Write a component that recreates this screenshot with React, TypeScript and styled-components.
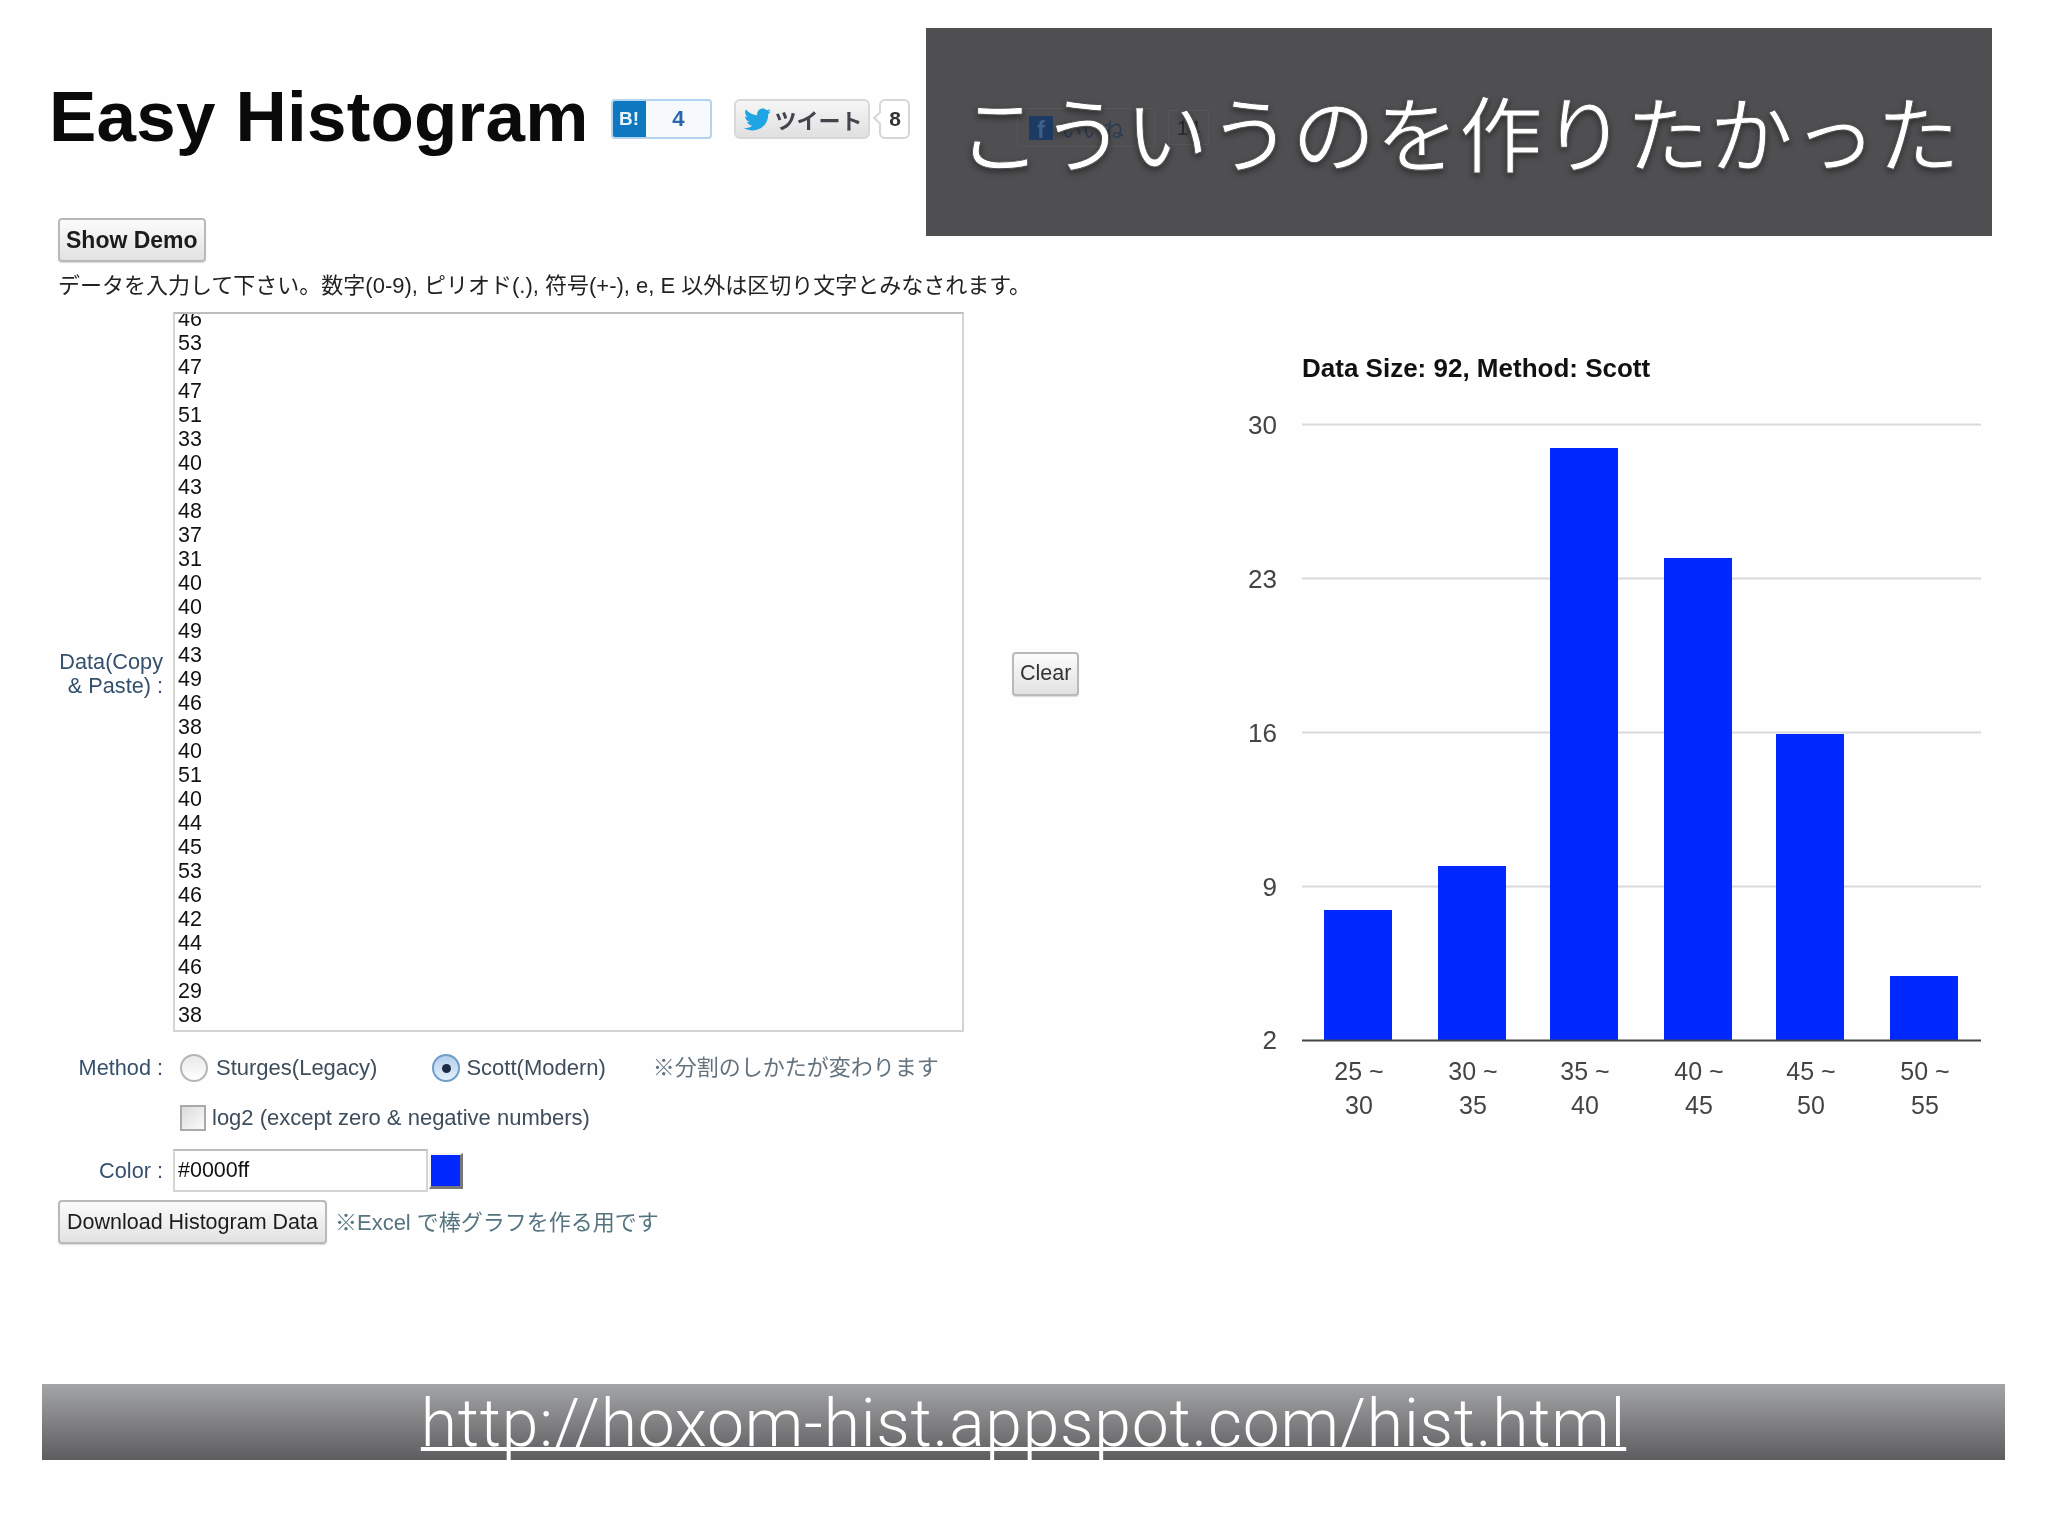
import styled, { createGlobalStyle } from "styled-components";
import { FaTwitter } from "react-icons/fa";

const SANS = `"Liberation Sans", "Noto Sans CJK JP", sans-serif`;

const GlobalStyle = createGlobalStyle`
  html, body {
    margin: 0;
    padding: 0;
    background: #fefefe;
  }
  * {
    box-sizing: border-box;
  }
`;

const Slide = styled.div`
  position: relative;
  width: 2048px;
  height: 1536px;
  overflow: hidden;
  font-family: ${SANS};
  font-size: 22px;
  color: #333;
  background: #fefefe;
`;

const Header = styled.header`
  display: flex;
  align-items: center;
  height: 112px;
  margin-top: 60px;
  padding-left: 49px;
  filter: blur(0.5px);
`;

const Title = styled.h1`
  margin: 0;
  font-size: 71px;
  font-weight: 700;
  letter-spacing: 0.2px;
  line-height: 1;
  color: #0a0a0a;
`;

const ShareGroup = styled.div`
  display: flex;
  margin-top: 6px;
`;

const HatenaButton = styled.div`
  display: flex;
  width: 101px;
  height: 40px;
  margin-left: 23px;
  border: 2px solid #b3d3ee;
  border-radius: 4px;
  overflow: hidden;
  background: #f6fafd;
`;

const HatenaMark = styled.span`
  width: 35px;
  margin: -2px 0 -2px -2px;
  background: #0d78c0;
  color: #e8f3fb;
  font-size: 19px;
  font-weight: 700;
  line-height: 40px;
  text-align: center;
`;

const HatenaCount = styled.span`
  flex: 1;
  color: #2a66ad;
  font-size: 22px;
  font-weight: 700;
  line-height: 36px;
  text-align: center;
`;

const TweetButton = styled.div`
  display: flex;
  align-items: center;
  gap: 3px;
  width: 136px;
  height: 40px;
  margin-left: 22px;
  padding-left: 8px;
  border: 2px solid #d8d8d8;
  border-radius: 6px;
  background: linear-gradient(#f6f6f6, #e0e0e0);
  color: #44444c;
  font-size: 22px;
  font-weight: 700;
  white-space: nowrap;

  svg {
    flex: none;
    color: #1fa5e4;
  }
`;

const CountBubble = styled.span`
  position: relative;
  width: 31px;
  height: 40px;
  margin-left: 9px;
  border: 2px solid #d6d6d6;
  border-radius: 6px;
  background: #fff;
  color: #333;
  font-size: 21px;
  font-weight: 700;
  line-height: 36px;
  text-align: center;

  &::before {
    content: "";
    position: absolute;
    left: -6px;
    top: 12px;
    width: 8px;
    height: 8px;
    border-left: 2px solid #d6d6d6;
    border-bottom: 2px solid #d6d6d6;
    background: #fff;
    transform: rotate(45deg);
  }
`;

const Banner = styled.div`
  position: absolute;
  left: 926px;
  top: 28px;
  display: flex;
  align-items: center;
  width: 1066px;
  height: 208px;
  padding: 0 0 4px 43px;
  background: #4f4e50;
`;

const BannerText = styled.div`
  position: relative;
  margin-left: -11px;
  font-family: "Noto Sans CJK JP", sans-serif;
  font-size: 83.5px;
  font-weight: 400;
  line-height: 1;
  white-space: nowrap;
  color: #fff;
  -webkit-text-stroke: 1px #4f4e50;
  filter: drop-shadow(0 3px 3px rgba(0, 0, 0, 0.4));
`;

const GhostShare = styled.div`
  position: absolute;
  left: 91px;
  top: 80px;
  display: flex;
  align-items: center;
  gap: 13px;
  filter: blur(0.6px);
`;

const GhostLike = styled.div`
  display: flex;
  align-items: center;
  width: 138px;
  height: 39px;
  padding-left: 11px;
  border: 1px solid #575658;
  border-radius: 5px;
  color: #2b3b52;
  font-size: 21px;
`;

const GhostMark = styled.span`
  width: 24px;
  height: 24px;
  background: #1d3a63;
  color: #3f5f87;
  font-size: 24px;
  font-weight: 700;
  line-height: 27px;
  text-align: center;
`;

const GhostLabel = styled.span`
  margin-left: 8px;
`;

const GhostCount = styled.span`
  width: 41px;
  height: 35px;
  border: 1px solid #575658;
  color: #2a2a2c;
  font-size: 21px;
  line-height: 33px;
  text-align: center;
`;

const Main = styled.main`
  display: flex;
  margin-top: 46px;
  padding-left: 58px;
  filter: blur(0.5px);
`;

const FormColumn = styled.section`
  flex: none;
  width: 1182px;
`;

const PushButton = styled.button<{ $bold?: boolean }>`
  display: block;
  height: 44px;
  padding: 0 ${(p) => (p.$bold ? 6 : 7)}px;
  border: 2px solid #b9b9b9;
  border-radius: 4px;
  background: linear-gradient(#fbfbfb, #e2e2e2);
  box-shadow: 0 1px 1px rgba(0, 0, 0, 0.15);
  color: #1c1c1c;
  font-family: ${SANS};
  font-size: ${(p) => (p.$bold ? 23 : 21.5)}px;
  font-weight: ${(p) => (p.$bold ? 700 : 400)};
  white-space: nowrap;
`;

const Help = styled.p`
  margin: 12px 0 0;
  font-size: 22px;
  line-height: 24px;
  color: #222;
  white-space: nowrap;
`;

const DataRow = styled.div`
  display: grid;
  grid-template-columns: 105px 791px auto;
  align-items: center;
  column-gap: 10px;
  margin-top: 14px;
`;

const FieldLabel = styled.label`
  color: #35506c;
  font-size: 21.7px;
  line-height: 24px;
  text-align: right;
`;

const DataLabel = styled(FieldLabel)`
  margin-top: 3px;
`;

const DataBox = styled.div`
  height: 720px;
  overflow: hidden;
  padding-left: 3px;
  border: 2px solid #d4d4d4;
  border-top-color: #bdbdbd;
  background: #fff;
  color: #111;
  font-size: 21.5px;
  line-height: 24px;
`;

const DataLine = styled.div`
  &:first-child {
    margin-top: -7px;
  }
`;

const ClearButton = styled(PushButton)`
  justify-self: start;
  margin: 3px 0 0 38px;
  padding: 0 6px;
  color: #333;
`;

const FormRow = styled.div`
  display: grid;
  grid-template-columns: 105px 1fr;
  align-items: center;
  column-gap: 10px;
`;

const MethodRow = styled(FormRow)`
  height: 30px;
  margin-top: 21px;
`;

const OptionRow = styled(FormRow)`
  height: 28px;
  margin-top: 21px;
`;

const ColorRow = styled(FormRow)`
  height: 43px;
  margin-top: 17px;
`;

const Options = styled.div`
  display: flex;
  align-items: center;
  padding-left: 7px;
  color: #3d4d5c;
  white-space: nowrap;
`;

const Radio = styled.span<{ $on?: boolean }>`
  flex: none;
  display: flex;
  align-items: center;
  justify-content: center;
  width: 28px;
  height: 28px;
  border: 2px solid ${(p) => (p.$on ? "#6f9ccb" : "#b5b5b5")};
  border-radius: 50%;
  background: ${(p) =>
    p.$on ? "linear-gradient(#b4d0ec, #e4f0fa)" : "linear-gradient(#e9e9e9, #fff)"};

  &::after {
    content: "";
    display: ${(p) => (p.$on ? "block" : "none")};
    width: 9px;
    height: 9px;
    border-radius: 50%;
    background: #1d2c44;
  }
`;

const OptionText = styled.span<{ $gap: number }>`
  margin-left: ${(p) => p.$gap}px;
`;

const SecondRadio = styled(Radio)`
  margin-left: 55px;
`;

const MethodNote = styled.span`
  margin: -6px 0 0 47px;
  color: #62737f;
`;

const CheckBox = styled.span`
  flex: none;
  width: 26px;
  height: 26px;
  border: 2px solid #a9a9a9;
  background: linear-gradient(135deg, #dcdcdc, #fafafa);
`;

const ColorField = styled.div`
  display: flex;
  align-items: center;
`;

const ColorInput = styled.div`
  width: 255px;
  height: 43px;
  padding-left: 3px;
  border: 2px solid #d4d4d4;
  border-top-color: #bdbdbd;
  background: #fff;
  color: #111;
  font-size: 21.5px;
  line-height: 39px;
`;

const Swatch = styled.span<{ $color: string }>`
  width: 34px;
  height: 36px;
  margin-left: 1px;
  border: 2px solid #f4f4f4;
  border-right: 3px solid #777;
  border-bottom: 3px solid #777;
  background: ${(p) => p.$color};
`;

const DownloadRow = styled.div`
  display: flex;
  align-items: center;
  margin-top: 8px;
`;

const DownloadNote = styled.span`
  margin: -5px 0 0 8px;
  color: #55747f;
  white-space: nowrap;
`;

const ChartSvg = styled.svg`
  flex: none;
  display: block;
  width: 760px;
  height: 790px;
  margin-top: 122px;
  font-family: ${SANS};
`;

const UrlBar = styled.div`
  position: absolute;
  left: 42px;
  right: 43px;
  top: 1384px;
  height: 76px;
  background: linear-gradient(#a4a5a6, #5d5d60);
  text-align: center;
`;

const UrlLink = styled.a`
  color: #fff;
  font-family: Roboto, "Liberation Sans", sans-serif;
  font-size: 66px;
  font-weight: 300;
  letter-spacing: 0.77px;
  line-height: 79px;
  text-decoration: underline;
  text-decoration-thickness: 4px;
  text-decoration-skip-ink: none;
  text-underline-offset: 1px;
`;

const data = [46, 53, 47, 47, 51, 33, 40, 43, 48, 37, 31, 40, 40, 49, 43, 49, 46, 38, 40, 51, 40, 44, 45, 53, 46, 42, 44, 46, 29, 38];

const gridLines = [
  { label: "30", y: 424.5 },
  { label: "23", y: 578.5 },
  { label: "16", y: 732.5 },
  { label: "9", y: 886.5 },
];

const bars = [
  { x: 1324, top: 910, from: "25 ~", to: "30" },
  { x: 1438, top: 866, from: "30 ~", to: "35" },
  { x: 1550, top: 448, from: "35 ~", to: "40" },
  { x: 1664, top: 558, from: "40 ~", to: "45" },
  { x: 1776, top: 734, from: "45 ~", to: "50" },
  { x: 1890, top: 976, from: "50 ~", to: "55" },
];

function Histogram() {
  return (
    <ChartSvg viewBox="1240 340 760 790">
      <text x="1302" y="377" fontSize="26" fontWeight="700" fill="#111">
        Data Size: 92, Method: Scott
      </text>
      {gridLines.map((g) => (
        <g key={g.label}>
          <line x1="1302" x2="1981" y1={g.y} y2={g.y} stroke="#d9d9d9" strokeWidth="2" />
          <text x="1277" y={g.y + 9} fontSize="26" fill="#444" textAnchor="end">
            {g.label}
          </text>
        </g>
      ))}
      {bars.map((b) => (
        <g key={b.from}>
          <rect x={b.x} y={b.top} width="68" height={1040 - b.top} fill="#0028ff" />
          <text x={b.x + 35} y="1080" fontSize="25" fill="#444" textAnchor="middle">
            {b.from}
          </text>
          <text x={b.x + 35} y="1114" fontSize="25" fill="#444" textAnchor="middle">
            {b.to}
          </text>
        </g>
      ))}
      <line x1="1302" x2="1981" y1="1040.5" y2="1040.5" stroke="#444" strokeWidth="2" />
      <text x="1277" y="1049" fontSize="26" fill="#444" textAnchor="end">
        2
      </text>
    </ChartSvg>
  );
}

export default function App() {
  return (
    <Slide>
      <GlobalStyle />
      <Header>
        <Title>Easy Histogram</Title>
        <ShareGroup>
          <HatenaButton>
            <HatenaMark>B!</HatenaMark>
            <HatenaCount>4</HatenaCount>
          </HatenaButton>
          <TweetButton>
            <FaTwitter size={27} />
            ツイート
          </TweetButton>
          <CountBubble>8</CountBubble>
        </ShareGroup>
      </Header>

      <Banner>
        <GhostShare>
          <GhostLike>
            <GhostMark>f</GhostMark>
            <GhostLabel>いいね</GhostLabel>
          </GhostLike>
          <GhostCount>14</GhostCount>
        </GhostShare>
        <BannerText>こういうのを作りたかった</BannerText>
      </Banner>

      <Main>
        <FormColumn>
          <PushButton $bold>Show Demo</PushButton>
          <Help>データを入力して下さい。数字(0-9), ピリオド(.), 符号(+-), e, E 以外は区切り文字とみなされます。</Help>
          <DataRow>
            <DataLabel>
              Data(Copy
              <br />
              &amp; Paste) :
            </DataLabel>
            <DataBox>
              {data.map((n, i) => (
                <DataLine key={i}>{n}</DataLine>
              ))}
            </DataBox>
            <ClearButton>Clear</ClearButton>
          </DataRow>

          <MethodRow>
            <FieldLabel>Method :</FieldLabel>
            <Options>
              <Radio />
              <OptionText $gap={8}>Sturges(Legacy)</OptionText>
              <SecondRadio $on />
              <OptionText $gap={6}>Scott(Modern)</OptionText>
              <MethodNote>※分割のしかたが変わります</MethodNote>
            </Options>
          </MethodRow>

          <OptionRow>
            <span />
            <Options>
              <CheckBox />
              <OptionText $gap={6}>log2 (except zero &amp; negative numbers)</OptionText>
            </Options>
          </OptionRow>

          <ColorRow>
            <FieldLabel>Color :</FieldLabel>
            <ColorField>
              <ColorInput>#0000ff</ColorInput>
              <Swatch $color="#0028ff" />
            </ColorField>
          </ColorRow>

          <DownloadRow>
            <PushButton>Download Histogram Data</PushButton>
            <DownloadNote>※Excel で棒グラフを作る用です</DownloadNote>
          </DownloadRow>
        </FormColumn>
        <Histogram />
      </Main>

      <UrlBar>
        <UrlLink href="#">http://hoxom-hist.appspot.com/hist.html</UrlLink>
      </UrlBar>
    </Slide>
  );
}
